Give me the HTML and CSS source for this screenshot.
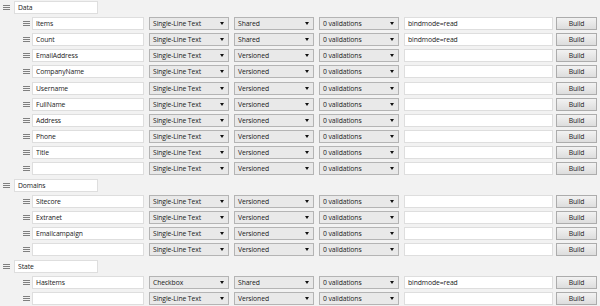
FILE: index.html
```html
<!DOCTYPE html>
<html lang="en">
<head>
  <meta charset="UTF-8" />
  <title>Template Fields</title>
  <link rel="stylesheet" href="styles.css">
</head>
<body>
<div class="fields">

  <div class="row section">
    <span class="handle"></span>
    <input class="name" type="text" value="Data">
  </div>
  <div class="row field">
    <span class="handle"></span>
    <input class="name" type="text" value="Items">
    <div class="select">Single-Line Text</div>
    <div class="select">Shared</div>
    <div class="select">0 validations</div>
    <input class="source" type="text" value="bindmode=read">
    <button class="build">Build</button>
  </div>
  <div class="row field">
    <span class="handle"></span>
    <input class="name" type="text" value="Count">
    <div class="select">Single-Line Text</div>
    <div class="select">Shared</div>
    <div class="select">0 validations</div>
    <input class="source" type="text" value="bindmode=read">
    <button class="build">Build</button>
  </div>
  <div class="row field">
    <span class="handle"></span>
    <input class="name" type="text" value="EmailAddress">
    <div class="select">Single-Line Text</div>
    <div class="select">Versioned</div>
    <div class="select">0 validations</div>
    <input class="source" type="text" value="">
    <button class="build">Build</button>
  </div>
  <div class="row field">
    <span class="handle"></span>
    <input class="name" type="text" value="CompanyName">
    <div class="select">Single-Line Text</div>
    <div class="select">Versioned</div>
    <div class="select">0 validations</div>
    <input class="source" type="text" value="">
    <button class="build">Build</button>
  </div>
  <div class="row field">
    <span class="handle"></span>
    <input class="name" type="text" value="Username">
    <div class="select">Single-Line Text</div>
    <div class="select">Versioned</div>
    <div class="select">0 validations</div>
    <input class="source" type="text" value="">
    <button class="build">Build</button>
  </div>
  <div class="row field">
    <span class="handle"></span>
    <input class="name" type="text" value="FullName">
    <div class="select">Single-Line Text</div>
    <div class="select">Versioned</div>
    <div class="select">0 validations</div>
    <input class="source" type="text" value="">
    <button class="build">Build</button>
  </div>
  <div class="row field">
    <span class="handle"></span>
    <input class="name" type="text" value="Address">
    <div class="select">Single-Line Text</div>
    <div class="select">Versioned</div>
    <div class="select">0 validations</div>
    <input class="source" type="text" value="">
    <button class="build">Build</button>
  </div>
  <div class="row field">
    <span class="handle"></span>
    <input class="name" type="text" value="Phone">
    <div class="select">Single-Line Text</div>
    <div class="select">Versioned</div>
    <div class="select">0 validations</div>
    <input class="source" type="text" value="">
    <button class="build">Build</button>
  </div>
  <div class="row field">
    <span class="handle"></span>
    <input class="name" type="text" value="Title">
    <div class="select">Single-Line Text</div>
    <div class="select">Versioned</div>
    <div class="select">0 validations</div>
    <input class="source" type="text" value="">
    <button class="build">Build</button>
  </div>
  <div class="row field">
    <span class="handle"></span>
    <input class="name" type="text" value="">
    <div class="select">Single-Line Text</div>
    <div class="select">Versioned</div>
    <div class="select">0 validations</div>
    <input class="source" type="text" value="">
    <button class="build">Build</button>
  </div>

  <div class="row section">
    <span class="handle"></span>
    <input class="name" type="text" value="Domains">
  </div>
  <div class="row field">
    <span class="handle"></span>
    <input class="name" type="text" value="Sitecore">
    <div class="select">Single-Line Text</div>
    <div class="select">Versioned</div>
    <div class="select">0 validations</div>
    <input class="source" type="text" value="">
    <button class="build">Build</button>
  </div>
  <div class="row field">
    <span class="handle"></span>
    <input class="name" type="text" value="Extranet">
    <div class="select">Single-Line Text</div>
    <div class="select">Versioned</div>
    <div class="select">0 validations</div>
    <input class="source" type="text" value="">
    <button class="build">Build</button>
  </div>
  <div class="row field">
    <span class="handle"></span>
    <input class="name" type="text" value="Emailcampaign">
    <div class="select">Single-Line Text</div>
    <div class="select">Versioned</div>
    <div class="select">0 validations</div>
    <input class="source" type="text" value="">
    <button class="build">Build</button>
  </div>
  <div class="row field">
    <span class="handle"></span>
    <input class="name" type="text" value="">
    <div class="select">Single-Line Text</div>
    <div class="select">Versioned</div>
    <div class="select">0 validations</div>
    <input class="source" type="text" value="">
    <button class="build">Build</button>
  </div>

  <div class="row section">
    <span class="handle"></span>
    <input class="name" type="text" value="State">
  </div>
  <div class="row field">
    <span class="handle"></span>
    <input class="name" type="text" value="HasItems">
    <div class="select">Checkbox</div>
    <div class="select">Shared</div>
    <div class="select">0 validations</div>
    <input class="source" type="text" value="bindmode=read">
    <button class="build">Build</button>
  </div>
  <div class="row field">
    <span class="handle"></span>
    <input class="name" type="text" value="">
    <div class="select">Single-Line Text</div>
    <div class="select">Versioned</div>
    <div class="select">0 validations</div>
    <input class="source" type="text" value="">
    <button class="build">Build</button>
  </div>

</div>
</body>
</html>
```

FILE: styles.css
```css
body {
  margin: 0;
  padding: 0;
  background: #f2f2f2;
  font-family: 'Open Sans', 'Noto Sans', sans-serif;
  font-size: 6.8px;
  letter-spacing: -0.1px;
  color: #1a1a1a;
}

.fields {
  margin-top: -1px;
}

.row {
  display: flex;
  align-items: center;
  height: 16.2px;
}

.section {
  padding-left: 3px;
}

.field {
  padding-left: 23px;
}

.handle {
  width: 7px;
  height: 5px;
  border-top: 1px solid #808080;
  border-bottom: 1px solid #808080;
  position: relative;
  margin-right: 2px;
  box-sizing: border-box;
}

.handle::after {
  content: "";
  position: absolute;
  left: 0;
  right: 0;
  top: 1px;
  border-top: 1px solid #808080;
}

.section .handle {
  margin-right: 4px;
}

input {
  font: inherit;
  letter-spacing: inherit;
  color: #1a1a1a;
  background: #fff;
  border: 1px solid #dedede;
  height: 13px;
  padding: 0 3px;
  margin: 0;
  box-sizing: border-box;
  outline: none;
}

.section .name {
  width: 84px;
}

.field .name {
  width: 112px;
  margin-right: 5px;
}

.select {
  position: relative;
  width: 80px;
  height: 13px;
  line-height: 11px;
  padding: 0 3px;
  margin-right: 5px;
  box-sizing: border-box;
  background: #e9e9e9;
  border: 1px solid #b4b4b4;
  white-space: nowrap;
}

.select::after {
  content: "";
  position: absolute;
  right: 4px;
  top: 4px;
  border-left: 2px solid transparent;
  border-right: 2px solid transparent;
  border-top: 3px solid #111;
}

.source {
  width: 149px;
  margin-right: 3px;
}

.build {
  width: 41px;
  height: 13px;
  padding: 0;
  font: inherit;
  letter-spacing: inherit;
  color: #1a1a1a;
  border: 1px solid #acacac;
  background: linear-gradient(#f2f2f2, #dddddd);
  cursor: pointer;
}
```
